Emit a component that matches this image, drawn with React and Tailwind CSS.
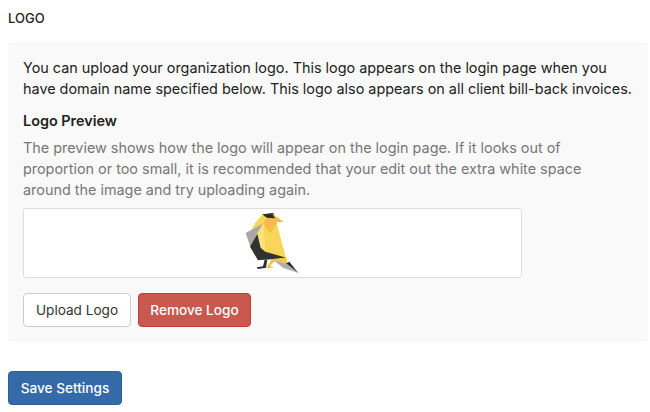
import React from 'react';

const Bird = () => (
  <svg width="54" height="62" viewBox="45 22 162 186">
    <polygon points="96,30 132,25 140,55 167,156 170,178 132,166 84,166 62,128 47,85 62,82 76,54" fill="#f7d65a" />
    <polygon points="97,29 130,25 136,42 110,39" fill="#2f2d2e" />
    <polygon points="126,26 161,53 139,51 136,42" fill="#f6b93f" />
    <polygon points="110,39 136,42 141,55 120,88 100,56" fill="#f6bc45" />
    <polygon points="47,85 100,56 82,86 62,128" fill="#a9a8a8" />
    <polygon points="100,56 82,86 92,128 106,140" fill="#f9e27c" />
    <polygon points="82,88 60,126 84,167 168,159 106,141 92,130" fill="#333132" />
    <polygon points="104,165 112,165 108,189 84,193 80,188 99,185" fill="#2f2d2e" />
    <polygon points="126,163 109,191 133,188 120,184 140,163" fill="#f6bc45" />
    <polygon points="130,165 170,158 171,178" fill="#f6c650" />
    <polygon points="130,166 171,178 205,205 160,190" fill="#b0afaf" />
    <polygon points="168,176 205,205 178,171" fill="#2f2d2e" />
  </svg>
);

export default function App() {
  return (
    <div className="w-[650px] h-[412px] bg-white overflow-hidden font-['Inter','Liberation_Sans',sans-serif] text-[#222]">
      <div className="px-2 pt-[11px]">
        <h2 className="text-[13px] leading-[15px] font-medium">LOGO</h2>

        <div className="mt-[16px] w-[640px] h-[300px] bg-[#f9f9f9] rounded-[3px] px-[15px] pt-[15px]">
          <p className="text-[14.4px] leading-[21px] whitespace-nowrap">
            You can upload your organization logo. This logo appears on the login page when you
            <br />
            have domain name specified below. This logo also appears on all client bill-back invoices.
          </p>
          <h3 className="mt-[11px] text-[14.4px] leading-[21px] font-semibold">Logo Preview</h3>
          <p className="mt-[6px] text-[14.4px] leading-[21px] text-[#777] whitespace-nowrap">
            The preview shows how the logo will appear on the login page. If it looks out of
            <br />
            proportion or too small, it is recommended that your edit out the extra white space
            <br />
            around the image and try uploading again.
          </p>

          <div className="mt-[8px] w-[499px] h-[70px] bg-white border border-[#ddd] rounded-[3px] flex items-center justify-center pr-[2px]">
            <Bird />
          </div>

          <div className="mt-[15px] flex gap-[7px]">
            <button className="w-[108px] h-[34px] bg-white border border-[#ccc] rounded-[4px] text-[13.6px] text-[#333]">
              Upload Logo
            </button>
            <button className="w-[113px] h-[34px] bg-[#c9584f] border border-[#c13f35] rounded-[4px] text-[13.6px] font-medium text-white">
              Remove Logo
            </button>
          </div>
        </div>

        <button className="mt-[29px] block w-[114px] h-[34px] bg-[#356aa8] border border-[#2e6099] rounded-[4px] text-[13.6px] font-medium text-white">
          Save Settings
        </button>
      </div>
    </div>
  );
}
